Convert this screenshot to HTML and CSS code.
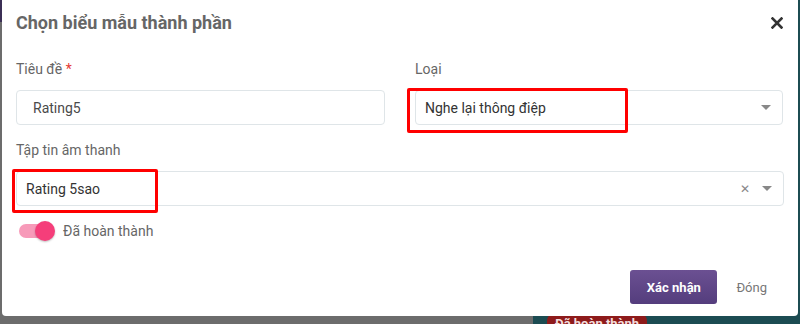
FILE: index.html
```html
<!DOCTYPE html>
<html>
<head>
    <meta charset="utf-8">
    <title>Chọn biểu mẫu thành phần</title>
    <link rel="stylesheet" href="styles.css">
</head>
<body>
    <div class="backdrop">
        <div class="backdrop-left"></div>
        <div class="backdrop-right">
            <span class="bg-badge">Đã hoàn thành</span>
        </div>
    </div>

    <div class="modal">
        <div class="modal-header">
            <h2 class="modal-title">Chọn biểu mẫu thành phần</h2>
            <svg class="close-btn" width="12" height="12" viewBox="0 0 12 12">
                <path d="M1.5 1.5 L10.5 10.5 M10.5 1.5 L1.5 10.5" stroke="#333" stroke-width="2.6" stroke-linecap="square"/>
            </svg>
        </div>
        <div class="modal-body">
            <div class="row">
                <div class="form-group">
                    <label>Tiêu đề <span class="required">*</span></label>
                    <div class="text-input">Rating5</div>
                </div>
                <div class="form-group">
                    <label>Loại</label>
                    <div class="select">
                        <span class="select-value">Nghe lại thông điệp</span>
                        <span class="caret"></span>
                    </div>
                    <div class="mark mark-type"></div>
                </div>
            </div>
            <div class="form-group">
                <label>Tập tin âm thanh</label>
                <div class="select">
                    <span class="select-value">Rating 5sao</span>
                    <span class="clear">&#x2715;</span>
                    <span class="caret"></span>
                </div>
                <div class="mark mark-file"></div>
            </div>
            <div class="switch-row">
                <span class="switch"><span class="knob"></span></span>
                <span class="switch-label">Đã hoàn thành</span>
            </div>
        </div>
        <div class="modal-footer">
            <button class="btn-primary">Xác nhận</button>
            <button class="btn-link">Đóng</button>
        </div>
    </div>
</body>
</html>
```

FILE: styles.css
```css
body {
    margin: 0;
    width: 800px;
    height: 324px;
    overflow: hidden;
    font-family: Roboto, 'Noto Sans', sans-serif;
    background: #757575;
    position: relative;
}
.backdrop {
    display: flex;
    height: 100%;
}
.backdrop-left {
    width: 533px;
    background: linear-gradient(#3b2f55 0, #3b2f55 22px, #6c6c6c 22px);
}
.backdrop-right {
    flex: 1;
    background: #1c4c52;
    padding: 317px 0 0 14px;
    line-height: 12px;
}
.bg-badge {
    background: #8e1b1b;
    color: #f3dede;
    font-size: 13px;
    font-weight: bold;
    padding: 3px 8px;
    border-radius: 8px;
}
.modal {
    position: absolute;
    left: 2px;
    top: 0;
    width: 796px;
    height: 316px;
    background: white;
    border-radius: 0 0 4px 4px;
    display: flex;
    flex-direction: column;
}
.modal-header {
    display: flex;
    justify-content: space-between;
    align-items: center;
    padding: 6px 15px 0 14px;
    height: 32px;
}
.modal-title {
    margin: 0;
    font-size: 18px;
    font-weight: bold;
    color: #666;
}
.close-btn {
    margin-top: 2px;
}
.modal-body {
    padding: 23px 14px 0 14px;
}
.row {
    display: grid;
    grid-template-columns: 369px 368px;
    column-gap: 30px;
}
.form-group {
    position: relative;
    margin-bottom: 17px;
}
.form-group label {
    display: block;
    font-size: 14px;
    color: #666;
    line-height: 16px;
    margin-bottom: 13px;
}
.required {
    color: #e53935;
}
.text-input, .select {
    box-sizing: border-box;
    height: 35px;
    border: 1px solid #dfe5e8;
    border-radius: 4px;
    font-size: 14px;
    color: #4a4a4a;
    display: flex;
    align-items: center;
    padding: 0 16px;
}
.select {
    padding: 0 10px 0 9px;
    color: #333;
}
.select-value {
    flex: 1;
}
.clear {
    color: #888;
    font-size: 12px;
    margin-right: 12px;
}
.caret {
    width: 0;
    height: 0;
    border-left: 5px solid transparent;
    border-right: 5px solid transparent;
    border-top: 5px solid #888;
    margin-right: 1px;
}
.switch-row {
    display: flex;
    align-items: center;
    gap: 10px;
    padding-left: 3px;
    margin-top: 5px;
}
.switch {
    width: 34px;
    height: 14px;
    border-radius: 7px;
    background: #f79ab9;
    position: relative;
}
.knob {
    position: absolute;
    right: -2px;
    top: -3px;
    width: 20px;
    height: 20px;
    border-radius: 50%;
    background: #f53e7a;
    box-shadow: 0 1px 2px rgba(0,0,0,0.25);
}
.switch-label {
    font-size: 14px;
    color: #666;
}
.modal-footer {
    margin-top: auto;
    display: flex;
    justify-content: flex-end;
    align-items: center;
    gap: 4px;
    padding: 0 16px 12px 0;
}
.btn-primary {
    width: 87px;
    height: 34px;
    border: none;
    border-radius: 3px;
    background: linear-gradient(#6b5092, #543d7d);
    color: white;
    font-family: inherit;
    font-size: 13px;
    font-weight: bold;
}
.btn-link {
    border: none;
    background: none;
    font-family: inherit;
    font-size: 13px;
    color: #777;
    padding: 0 15px;
}
.mark {
    position: absolute;
    border: 3px solid #ff0000;
    border-radius: 2px;
}
.mark-type {
    left: -8px;
    top: 27px;
    width: 215px;
    height: 39px;
}
.mark-file {
    left: -4px;
    top: 27px;
    width: 140px;
    height: 38px;
}
```
